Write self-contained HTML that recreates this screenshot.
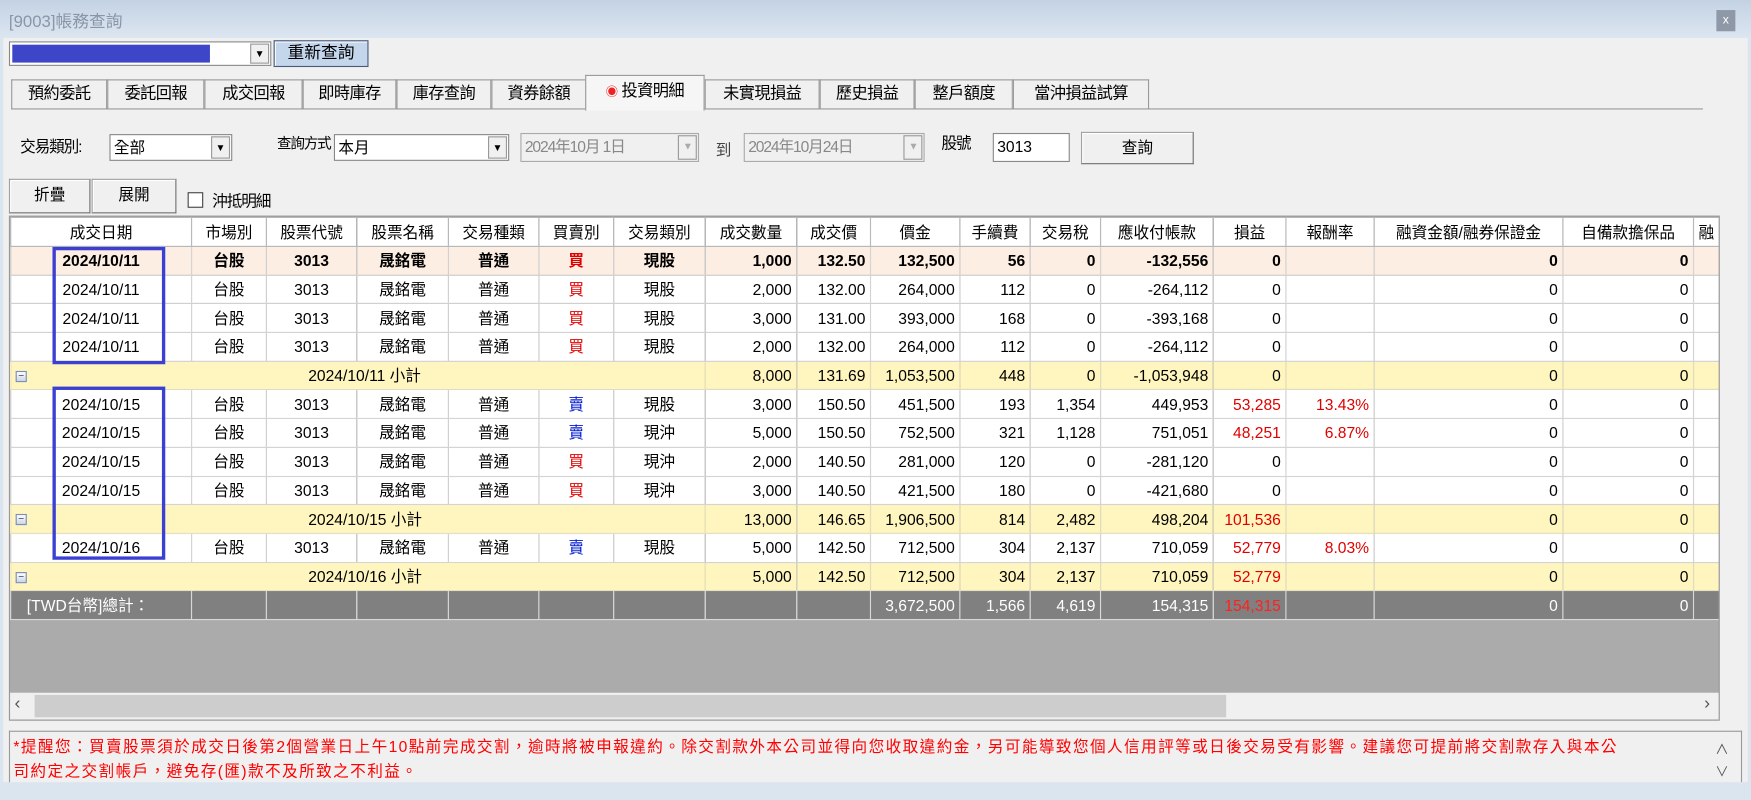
<!DOCTYPE html>
<html><head><meta charset="utf-8"><style>
*{box-sizing:border-box;margin:0;padding:0}
body{width:1751px;height:800px;overflow:hidden;background:#dbe5f0;font-family:"Liberation Sans","Noto Sans CJK TC",sans-serif;}
#w{position:absolute;left:0;top:0;width:1568px;height:716px;transform:scale(1.11671,1.1173);transform-origin:0 0;background:#dbe5f0;font-size:14px;color:#000}
.a{position:absolute}
#title{left:0;top:0;width:1568px;height:34px;background:linear-gradient(#c3d2e3,#dce6f1)}
#content{left:3px;top:34px;width:1562px;height:666px;background:#f0f0f0}
.btn{position:absolute;border:1px solid #a0a0a0;border-right-color:#707070;border-bottom-color:#707070;background:#f0f0f0;text-align:center;box-shadow:inset 1px 1px 0 #fff}
.combo{position:absolute;background:#fff;border:1px solid #888;height:24px;line-height:22px;padding-left:3px}
.combo .dd{position:absolute;right:1px;top:1px;width:17px;height:20px;border:1px solid #999;background:#f0f0f0;font-size:9px;text-align:center;line-height:19px}
.tab{position:absolute;top:71px;height:27px;border:1px solid #9a9a9a;border-bottom:none;background:#f0f0f0;text-align:center;line-height:25px;font-size:14.5px;letter-spacing:-0.5px}
table{border-collapse:collapse;table-layout:fixed;font-size:14px}
td{height:25.7px;border:1px solid #d4d4d4;padding:0 4px;white-space:nowrap;overflow:hidden;text-align:right}
tr.h td{text-align:center;border-color:#b9b9b9;background:#fff;height:26px}
td.c{text-align:center}
.r{color:#e00000}.b{color:#0018d0}
tr.p td{background:#fdeee3;font-weight:bold}
tr.y td{background:#fff5bf;border-left-color:#fff5bf;border-right-color:#fff5bf;border-top-color:#e4e0c0;border-bottom-color:#e4e0c0}
tr.y td.n{border-left-color:#e0dcc0;border-right-color:#e0dcc0}
tr.t td{background:#808080;color:#fff;border-color:#d8d8d8}
.mb{position:absolute;left:4px;top:8px;width:10px;height:10px;border:1px solid #7b8eb3;background:linear-gradient(#fff,#cbd6e6);font-size:9px;line-height:7px;text-align:center;color:#335}
.lb{letter-spacing:-1px}
</style></head><body><div id="w">
<div class="a" id="title"><div class="a" style="left:8px;top:8px;color:#8a96a6;font-size:15px">[9003]帳務查詢</div>
<div class="a" style="left:1537px;top:9px;width:17px;height:19px;background:#8e98a6;color:#fff;font-size:11px;text-align:center;line-height:18px">x</div></div>
<div class="a" id="content"></div>
<div class="combo" style="left:8px;top:37px;width:235px;height:22px;padding:0"><div class="a" style="left:2px;top:2px;width:177px;height:16px;background:#3d45c9"></div><div class="dd" style="height:18px;line-height:17px">▼</div></div>
<div class="btn" style="left:245px;top:36px;width:85px;height:24px;background:#c4d6ec;border-color:#4a5a78;line-height:21px;font-size:15px">重新查詢</div>
<div class="tab" style="left:10px;width:86px">預約委託</div>
<div class="tab" style="left:96px;width:87px">委託回報</div>
<div class="tab" style="left:183px;width:88px">成交回報</div>
<div class="tab" style="left:271px;width:84px">即時庫存</div>
<div class="tab" style="left:355px;width:85px">庫存查詢</div>
<div class="tab" style="left:440px;width:85px">資券餘額</div>
<div class="tab" style="left:524px;width:107px;top:67px;height:32px;line-height:29px;background:#f6f6f6;z-index:2"><span style="color:#e22;font-size:11px">◉</span> 投資明細</div>
<div class="tab" style="left:631px;width:103px">未實現損益</div>
<div class="tab" style="left:734px;width:85px">歷史損益</div>
<div class="tab" style="left:819px;width:88px">整戶額度</div>
<div class="tab" style="left:907px;width:122px">當沖損益試算</div>
<div class="a" style="left:10px;top:97px;width:1515px;height:1px;background:#9a9a9a"></div>
<div class="a lb" style="left:18px;top:121px">交易類別:</div>
<div class="combo" style="left:98px;top:120px;width:110px">全部<div class="dd">▼</div></div>
<div class="a lb" style="left:248px;top:118px;font-size:13px">查詢方式</div>
<div class="combo" style="left:299px;top:120px;width:157px">本月<div class="dd">▼</div></div>
<div class="combo lb" style="left:466px;top:119px;width:160px;height:26px;background:#f0f0f0;color:#888;border-color:#aaa">2024年10月 1日<div class="dd" style="color:#aaa;height:22px">▼</div></div>
<div class="a" style="left:641px;top:124px;color:#444">到</div>
<div class="combo lb" style="left:666px;top:119px;width:162px;height:26px;background:#f0f0f0;color:#888;border-color:#aaa">2024年10月24日<div class="dd" style="color:#aaa;height:22px">▼</div></div>
<div class="a lb" style="left:843px;top:118px">股號</div>
<div class="combo" style="left:889px;top:119px;width:69px;height:26px">3013</div>
<div class="btn" style="left:968px;top:118px;width:101px;height:29px;line-height:27px">查詢</div>
<div class="btn" style="left:8px;top:160px;width:73px;height:31px;line-height:26px">折疊</div>
<div class="btn" style="left:82px;top:160px;width:76px;height:31px;line-height:26px">展開</div>
<div class="a" style="left:168px;top:172px;width:14px;height:14px;border:1px solid #444;background:#fff"></div>
<div class="a lb" style="left:190px;top:170px">沖抵明細</div>
<div class="a" style="left:8px;top:193px;width:1532px;height:452px;background:#ababab;border:1px solid #999;overflow:hidden">
<table style="width:1532px">
<colgroup><col style="width:162px"><col style="width:67px"><col style="width:81px"><col style="width:82px"><col style="width:81px"><col style="width:67px"><col style="width:82px"><col style="width:82px"><col style="width:66px"><col style="width:80px"><col style="width:63px"><col style="width:63px"><col style="width:101px"><col style="width:65px"><col style="width:79px"><col style="width:169px"><col style="width:117px"><col style="width:25px"></colgroup>
<tr class="h"><td>成交日期</td><td>市場別</td><td>股票代號</td><td>股票名稱</td><td>交易種類</td><td>買賣別</td><td>交易類別</td><td>成交數量</td><td>成交價</td><td>價金</td><td>手續費</td><td>交易稅</td><td>應收付帳款</td><td>損益</td><td>報酬率</td><td>融資金額/融券保證金</td><td>自備款擔保品</td><td style="text-align:left">融</td></tr>
<tr class="p"><td class="c">2024/10/11</td><td class="c">台股</td><td class="c">3013</td><td class="c">晟銘電</td><td class="c">普通</td><td class="c r">買</td><td class="c">現股</td><td>1,000</td><td>132.50</td><td>132,500</td><td>56</td><td>0</td><td>-132,556</td><td>0</td><td></td><td>0</td><td>0</td><td></td></tr>
<tr style="background:#fff"><td class="c">2024/10/11</td><td class="c">台股</td><td class="c">3013</td><td class="c">晟銘電</td><td class="c">普通</td><td class="c r">買</td><td class="c">現股</td><td>2,000</td><td>132.00</td><td>264,000</td><td>112</td><td>0</td><td>-264,112</td><td>0</td><td></td><td>0</td><td>0</td><td></td></tr>
<tr style="background:#fff"><td class="c">2024/10/11</td><td class="c">台股</td><td class="c">3013</td><td class="c">晟銘電</td><td class="c">普通</td><td class="c r">買</td><td class="c">現股</td><td>3,000</td><td>131.00</td><td>393,000</td><td>168</td><td>0</td><td>-393,168</td><td>0</td><td></td><td>0</td><td>0</td><td></td></tr>
<tr style="background:#fff"><td class="c">2024/10/11</td><td class="c">台股</td><td class="c">3013</td><td class="c">晟銘電</td><td class="c">普通</td><td class="c r">買</td><td class="c">現股</td><td>2,000</td><td>132.00</td><td>264,000</td><td>112</td><td>0</td><td>-264,112</td><td>0</td><td></td><td>0</td><td>0</td><td></td></tr>
<tr class="y"><td colspan="7" style="position:relative;text-align:left;padding-left:266px"><div class="mb">−</div>2024/10/11 小計</td><td class="n">8,000</td><td class="n">131.69</td><td class="n">1,053,500</td><td class="n">448</td><td class="n">0</td><td class="n">-1,053,948</td><td class="n">0</td><td class="n"></td><td class="n">0</td><td class="n">0</td><td class="n"></td></tr>
<tr style="background:#fff"><td class="c">2024/10/15</td><td class="c">台股</td><td class="c">3013</td><td class="c">晟銘電</td><td class="c">普通</td><td class="c b">賣</td><td class="c">現股</td><td>3,000</td><td>150.50</td><td>451,500</td><td>193</td><td>1,354</td><td>449,953</td><td class="r">53,285</td><td class="r">13.43%</td><td>0</td><td>0</td><td></td></tr>
<tr style="background:#fff"><td class="c">2024/10/15</td><td class="c">台股</td><td class="c">3013</td><td class="c">晟銘電</td><td class="c">普通</td><td class="c b">賣</td><td class="c">現沖</td><td>5,000</td><td>150.50</td><td>752,500</td><td>321</td><td>1,128</td><td>751,051</td><td class="r">48,251</td><td class="r">6.87%</td><td>0</td><td>0</td><td></td></tr>
<tr style="background:#fff"><td class="c">2024/10/15</td><td class="c">台股</td><td class="c">3013</td><td class="c">晟銘電</td><td class="c">普通</td><td class="c r">買</td><td class="c">現沖</td><td>2,000</td><td>140.50</td><td>281,000</td><td>120</td><td>0</td><td>-281,120</td><td>0</td><td></td><td>0</td><td>0</td><td></td></tr>
<tr style="background:#fff"><td class="c">2024/10/15</td><td class="c">台股</td><td class="c">3013</td><td class="c">晟銘電</td><td class="c">普通</td><td class="c r">買</td><td class="c">現沖</td><td>3,000</td><td>140.50</td><td>421,500</td><td>180</td><td>0</td><td>-421,680</td><td>0</td><td></td><td>0</td><td>0</td><td></td></tr>
<tr class="y"><td colspan="7" style="position:relative;text-align:left;padding-left:266px"><div class="mb">−</div>2024/10/15 小計</td><td class="n">13,000</td><td class="n">146.65</td><td class="n">1,906,500</td><td class="n">814</td><td class="n">2,482</td><td class="n">498,204</td><td class="n r">101,536</td><td class="n"></td><td class="n">0</td><td class="n">0</td><td class="n"></td></tr>
<tr style="background:#fff"><td class="c">2024/10/16</td><td class="c">台股</td><td class="c">3013</td><td class="c">晟銘電</td><td class="c">普通</td><td class="c b">賣</td><td class="c">現股</td><td>5,000</td><td>142.50</td><td>712,500</td><td>304</td><td>2,137</td><td>710,059</td><td class="r">52,779</td><td class="r">8.03%</td><td>0</td><td>0</td><td></td></tr>
<tr class="y"><td colspan="7" style="position:relative;text-align:left;padding-left:266px"><div class="mb">−</div>2024/10/16 小計</td><td class="n">5,000</td><td class="n">142.50</td><td class="n">712,500</td><td class="n">304</td><td class="n">2,137</td><td class="n">710,059</td><td class="n r">52,779</td><td class="n"></td><td class="n">0</td><td class="n">0</td><td class="n"></td></tr>
<tr class="t"><td style="text-align:left;padding-left:14px">[TWD台幣]總計：</td><td></td><td></td><td></td><td></td><td></td><td></td><td></td><td></td><td>3,672,500</td><td>1,566</td><td>4,619</td><td>154,315</td><td style="color:#ff2020">154,315</td><td></td><td>0</td><td>0</td><td></td></tr>
</table>
<div class="a" style="left:0;top:426px;width:1532px;height:24px;background:#f0f0f0"></div>
<div class="a" style="left:22px;top:428px;width:1067px;height:20px;background:#cdcdcd"></div>
<div class="a" style="left:4px;top:427px;color:#555;font-size:16px">‹</div>
<div class="a" style="left:1517px;top:427px;color:#555;font-size:16px">›</div>
</div>
<div class="a" style="left:8px;top:654px;width:1552px;height:46px;background:#f0f0f0;border:1px solid #999;border-bottom:none;overflow:hidden;color:#f00;font-size:14px;line-height:22px;padding:2px 0 0 3px;white-space:nowrap"><div style="width:1520px;letter-spacing:1.25px">*提醒您：買賣股票須於成交日後第2個營業日上午10點前完成交割，逾時將被申報違約。除交割款外本公司並得向您收取違約金，另可能導致您個人信用評等或日後交易受有影響。建議您可提前將交割款存入與本公<br>司約定之交割帳戶，避免存(匯)款不及所致之不利益。<br>*提醒您：買賣股票須於成交日後第2個營業日上午10點前完成交割，逾時將被申報違約。除交割款外本公司並得向您收取違約金，另可能導致您個人信用評等。</div></div>
<div class="a" style="left:1536px;top:662px;color:#555;font-size:12px">∧</div>
<div class="a" style="left:1536px;top:682px;color:#555;font-size:12px">∨</div>
<div class="a" style="left:47px;top:221px;width:101px;height:105px;border:3px solid #3b40d2"></div>
<div class="a" style="left:47px;top:346px;width:101px;height:155px;border:3px solid #3b40d2"></div>
</div></body></html>
